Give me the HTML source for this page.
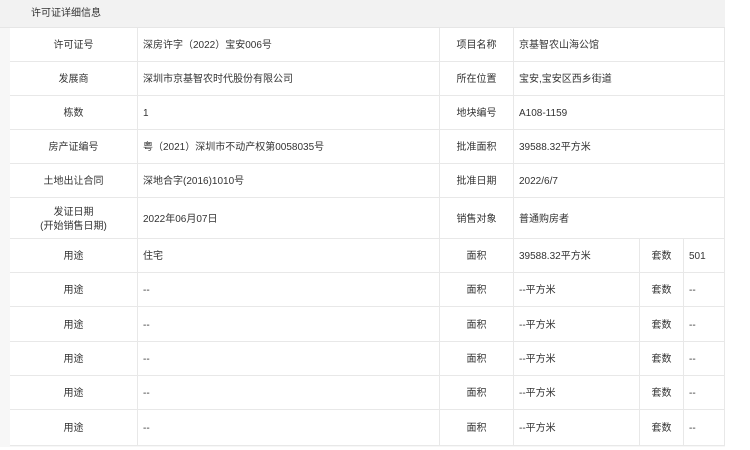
<!DOCTYPE html>
<html><head><meta charset="utf-8"><style>
*{margin:0;padding:0;box-sizing:border-box}
body{width:750px;height:450px;background:#fff;font-family:"Liberation Sans","Noto Sans CJK SC",sans-serif;font-size:10px;color:#333;position:relative;overflow:hidden}
.bg{position:absolute;left:0;top:0;width:725px;height:447px;background:#f7f7f7}
.hd{position:absolute;left:0;top:0;width:725px;height:28px;background:#f2f2f2;border-bottom:1px solid #e6e6e6;padding-left:31px;line-height:28px}
.c{position:absolute;background:#fff;border-right:1px solid #e8e8e8;border-bottom:1px solid #e8e8e8;display:flex;align-items:center}
.c span{display:block;line-height:14px;height:14px;margin-top:3px}
.c span.two{height:28px}
.l{justify-content:center;text-align:center}
.v{padding-left:5px}
</style></head><body>
<div class="bg"></div>
<div class="hd">许可证详细信息</div>
<div id="t"></div>
<script>
var rows=[
["许可证号","深房许字（2022）宝安006号","项目名称","京基智农山海公馆"],
["发展商","深圳市京基智农时代股份有限公司","所在位置","宝安,宝安区西乡街道"],
["栋数","1","地块编号","A108-1159"],
["房产证编号","粤（2021）深圳市不动产权第0058035号","批准面积","39588.32平方米"],
["土地出让合同","深地合字(2016)1010号","批准日期","2022/6/7"],
["发证日期<br>(开始销售日期)","2022年06月07日","销售对象","普通购房者"],
["用途","住宅","面积","39588.32平方米","套数","501"],
["用途","--","面积","--平方米","套数","--"],
["用途","--","面积","--平方米","套数","--"],
["用途","--","面积","--平方米","套数","--"],
["用途","--","面积","--平方米","套数","--"],
["用途","--","面积","--平方米","套数","--"]];
var ys=[28,62,96,130,164,198,239,273,307,342,376,410,446];
var h="";
function cell(x,w,y,hh,cls,t){h+='<div class="c '+cls+'" style="left:'+x+'px;top:'+y+'px;width:'+w+'px;height:'+hh+'px"><span'+(t.indexOf("<br>")>=0?' class="two"':'')+'>'+t+'</span></div>';}
rows.forEach(function(r,i){var y=ys[i],hh=ys[i+1]-y;
cell(10,128,y,hh,"l",r[0]);cell(138,302,y,hh,"v",r[1]);cell(440,74,y,hh,"l",r[2]);
if(r.length>4){cell(514,126,y,hh,"v",r[3]);cell(640,44,y,hh,"l",r[4]);cell(684,41,y,hh,"v",r[5]);}
else cell(514,211,y,hh,"v",r[3]);});
document.getElementById("t").innerHTML=h;
</script>
</body></html>
